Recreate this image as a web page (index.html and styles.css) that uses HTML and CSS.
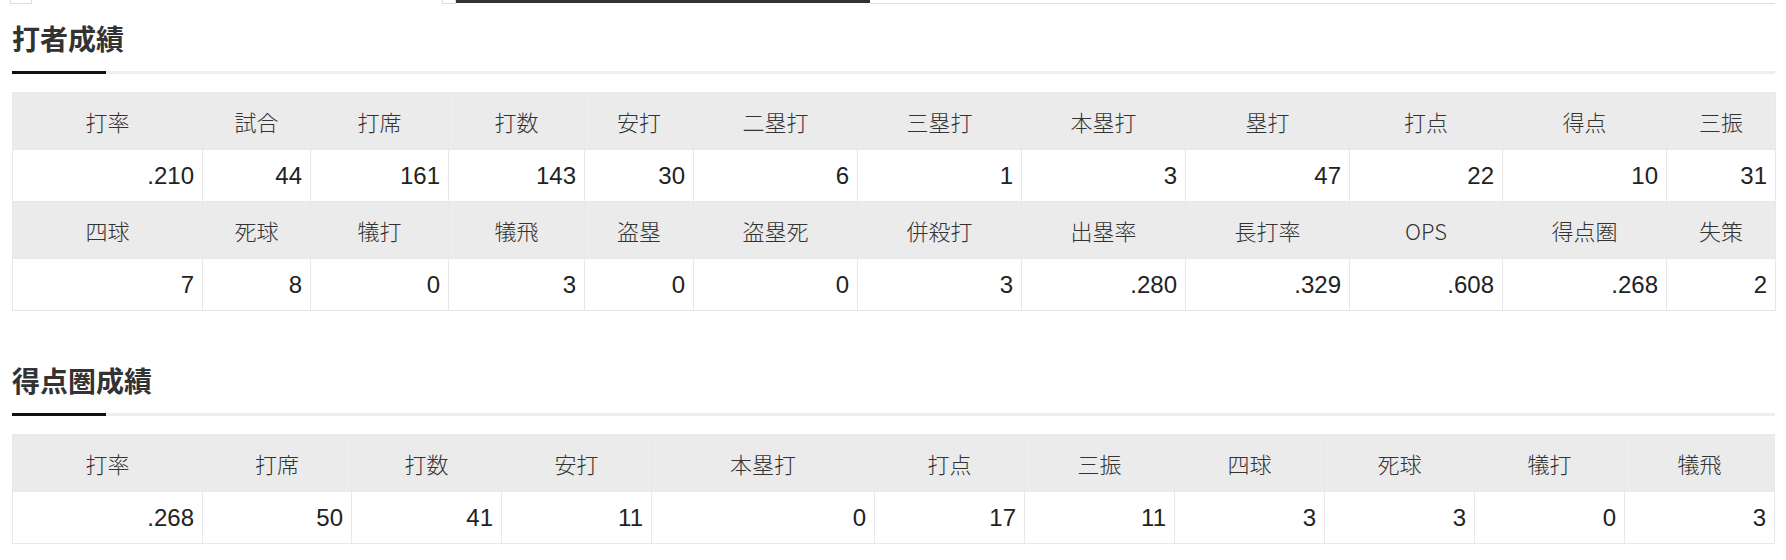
FILE: index.html
```html
<!DOCTYPE html>
<html lang="ja">
<head>
<meta charset="utf-8">
<link rel="stylesheet" href="styles.css">
</head>
<body>
<div class="page">
  <div class="tabs">
    <span class="tab tab-a"></span>
    <span class="tab-gap1"></span>
    <span class="tab tab-b"></span>
    <span class="tab-active"></span>
    <span class="tab-line"></span>
  </div>

  <section class="section">
    <h2 class="title">打者成績</h2>
    <div class="rule"><span class="rule-mark"></span></div>
    <table class="stats">
      <colgroup>
        <col style="width:190px"><col style="width:108px"><col style="width:138px"><col style="width:136px"><col style="width:109px"><col style="width:164px"><col style="width:164px"><col style="width:164px"><col style="width:164px"><col style="width:153px"><col style="width:164px"><col style="width:109px">
      </colgroup>
      <tr class="head"><th>打率</th><th>試合</th><th>打席</th><th>打数</th><th>安打</th><th>二塁打</th><th>三塁打</th><th>本塁打</th><th>塁打</th><th>打点</th><th>得点</th><th>三振</th></tr>
      <tr class="data"><td>.210</td><td>44</td><td>161</td><td>143</td><td>30</td><td>6</td><td>1</td><td>3</td><td>47</td><td>22</td><td>10</td><td>31</td></tr>
      <tr class="head"><th>四球</th><th>死球</th><th>犠打</th><th>犠飛</th><th>盗塁</th><th>盗塁死</th><th>併殺打</th><th>出塁率</th><th>長打率</th><th>OPS</th><th>得点圏</th><th>失策</th></tr>
      <tr class="data"><td>7</td><td>8</td><td>0</td><td>3</td><td>0</td><td>0</td><td>3</td><td>.280</td><td>.329</td><td>.608</td><td>.268</td><td>2</td></tr>
    </table>
  </section>

  <section class="section section-2">
    <h2 class="title">得点圏成績</h2>
    <div class="rule"><span class="rule-mark"></span></div>
    <table class="stats">
      <colgroup>
        <col style="width:190px"><col style="width:149px"><col style="width:150px"><col style="width:150px"><col style="width:223px"><col style="width:150px"><col style="width:150px"><col style="width:150px"><col style="width:150px"><col style="width:150px"><col style="width:150px">
      </colgroup>
      <tr class="head"><th>打率</th><th>打席</th><th>打数</th><th>安打</th><th>本塁打</th><th>打点</th><th>三振</th><th>四球</th><th>死球</th><th>犠打</th><th>犠飛</th></tr>
      <tr class="data"><td>.268</td><td>50</td><td>41</td><td>11</td><td>0</td><td>17</td><td>11</td><td>3</td><td>3</td><td>0</td><td>3</td></tr>
    </table>
  </section>
</div>
</body>
</html>
```

FILE: styles.css
```css
* { box-sizing: border-box; }
html, body { margin: 0; padding: 0; background: #fff; }
body {
  font-family: "Liberation Sans", Arial, "Noto Sans CJK JP", sans-serif;
  color: #333;
}
.page { padding: 0 11px 0 12px; }

.tabs {
  display: flex;
  height: 4px;
  align-items: flex-start;
  margin-left: -2px;
}
.tab { height: 4px; border: 1px solid #ddd; border-top: 0; background: #fff; }
.tab-a { width: 22px; }
.tab-gap1 { width: 410px; }
.tab-b { width: 14px; }
.tab-active { width: 414px; height: 3px; background: #333; }
.tab-line { flex: 1; height: 4px; border-bottom: 1px solid #ddd; }

.section { margin-top: 17px; }
.section-2 { margin-top: 52px; }

.title {
  margin: 0;
  font-family: "Noto Sans CJK JP", sans-serif;
  font-weight: 700;
  font-size: 28px;
  line-height: 34px;
  color: #333;
}
.rule {
  margin-top: 16px;
  height: 3px;
  background: #eee;
  display: flex;
}
.rule-mark { width: 94px; height: 3px; background: #111; }

.stats {
  margin-top: 18px;
  width: 100%;
  border-collapse: collapse;
  table-layout: fixed;
  border: 1px solid #e3e3e3;
  font-size: 24px;
}
.stats th, .stats td {
  border: 1px solid #e8e8e8;
  padding: 0 8px;
  white-space: nowrap;
}
.stats th {
  background: #ebebeb;
  font-weight: 300;
  text-align: center;
  height: 57px;
  font-family: "Noto Sans CJK JP", sans-serif;
  font-size: 22px;
  color: #333;
}
.stats td {
  background: #fff;
  text-align: right;
  height: 52px;
  color: #222;
}
```
